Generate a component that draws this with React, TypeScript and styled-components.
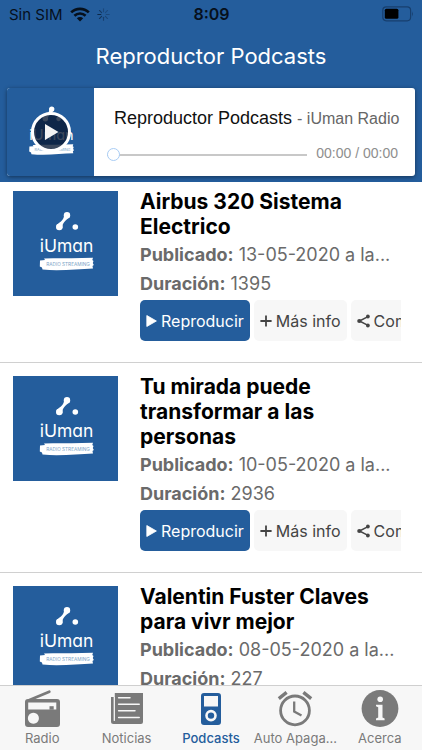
import React, { useState } from "react";
import styled, { createGlobalStyle } from "styled-components";

const blue = "#245d9c";
const gray = "#7a7a7a";

const GlobalStyle = createGlobalStyle`
  *, *::before, *::after { box-sizing: border-box; }
  body { margin: 0; background: #fff; font-family: Inter, "Noto Sans", sans-serif; }
  h1, h2, p { margin: 0; }
  button { font: inherit; border: 0; padding: 0; margin: 0; cursor: pointer; }
`;

const Screen = styled.div`
  display: flex;
  flex-direction: column;
  height: 100vh;
  overflow: hidden;
`;

const Header = styled.header`
  flex: none;
  background: ${blue};
  padding-bottom: 6px;
`;

const StatusBar = styled.div`
  display: grid;
  grid-template-columns: 1fr auto 1fr;
  align-items: center;
  height: 28px;
  padding: 0 8px 0 9px;
  color: #06101c;
  font-size: 15px;
`;

const Carrier = styled.div`
  display: flex;
  align-items: center;
  gap: 7px;
`;

const Clock = styled.time`
  font-weight: 600;
  font-size: 16px;
`;

const BatterySlot = styled.div`
  display: flex;
  justify-content: flex-end;
`;

const PageTitle = styled.h1`
  height: 60px;
  line-height: 56px;
  text-align: center;
  color: #fff;
  font-size: 22px;
  font-weight: 400;
`;

const Player = styled.section`
  display: flex;
  height: 88px;
  margin: 0 7px;
  border-radius: 3px;
  overflow: hidden;
  background: #fff;
  box-shadow: 0 1px 4px rgba(0, 0, 0, 0.45);
`;

const PlayerArt = styled.div`
  display: grid;
  flex: none;
  width: 87px;
  background: ${blue};
  & > * { grid-area: 1 / 1; place-self: center; }
`;

const PlayButton = styled.button`
  display: flex;
  align-items: center;
  justify-content: center;
  width: 40px;
  height: 40px;
  border: 3px solid #fff;
  border-radius: 50%;
  background: rgba(10, 26, 52, 0.8);
`;

const PlayerBody = styled.div`
  flex: 1;
  min-width: 0;
  padding: 17px 12px 0 13px;
  font-family: "Liberation Sans", Arial, sans-serif;
`;

const TrackTitle = styled.p`
  padding-left: 7px;
  line-height: 26px;
  white-space: nowrap;
  color: #111;
  font-size: 18px;
  span { font-size: 16px; color: #666; }
`;

const Progress = styled.div`
  display: flex;
  align-items: center;
  gap: 9px;
  height: 24px;
  margin-top: 11px;
  padding-right: 5px;
  color: #8e8e8e;
  font-size: 14px;
  white-space: nowrap;
`;

const TimeText = styled.span`
  height: 20px;
`;

const Seek = styled.input`
  flex: 1;
  min-width: 0;
  height: 14px;
  margin: 0;
  appearance: none;
  background: transparent;
  &::-webkit-slider-runnable-track { height: 2px; background: #c8c8c8; }
  &::-webkit-slider-thumb {
    appearance: none;
    width: 13px;
    height: 13px;
    margin-top: -6px;
    border: 1px solid #a9cdf5;
    border-radius: 50%;
    background: #fff;
  }
`;

const List = styled.main`
  flex: 1;
  min-height: 0;
  overflow-y: auto;
  scrollbar-width: none;
`;

const Episode = styled.article`
  display: flex;
  align-items: flex-start;
  gap: 22px;
  padding: 11px 21px 21px 13px;
  border-bottom: 1px solid #d0d0d0;
  &:first-child { padding-top: 7px; }
`;

const Cover = styled.div`
  flex: none;
  width: 105px;
  height: 105px;
  margin-top: 2px;
  background: ${blue};
`;

const Details = styled.div`
  flex: 1;
  min-width: 0;
`;

const EpisodeTitle = styled.h2`
  margin-bottom: 1px;
  color: #000;
  font-size: 21px;
  font-weight: 700;
  line-height: 25px;
`;

const Meta = styled.p`
  overflow: hidden;
  white-space: nowrap;
  color: #6a6a6a;
  font-size: 18px;
  line-height: 29px;
`;

const Actions = styled.div`
  display: flex;
  gap: 4px;
  margin-top: 2px;
  overflow: hidden;
`;

const Action = styled.button<{ $primary?: boolean }>`
  display: flex;
  flex: none;
  align-items: center;
  gap: 4px;
  height: 41px;
  padding: 0 6px;
  border-radius: 5px;
  background: ${(p) => (p.$primary ? blue : "#f7f7f7")};
  color: ${(p) => (p.$primary ? "#fff" : "#444")};
  && { font-size: 16px; }
`;

const TabBar = styled.nav`
  display: grid;
  flex: none;
  grid-template-columns: repeat(5, 1fr);
  height: 65px;
  border-top: 1px solid #cfcfcf;
  background: #f7f7f7;
`;

const Tab = styled.a<{ $active?: boolean }>`
  display: flex;
  flex-direction: column;
  align-items: center;
  gap: 1px;
  padding-top: 3px;
  white-space: nowrap;
  text-decoration: none;
  color: ${(p) => (p.$active ? blue : gray)};
  font-size: 13px;
  font-weight: ${(p) => (p.$active ? 500 : 400)};
  line-height: 20px;
`;

const LogoText = styled.text`
  font-family: Inter, sans-serif;
  font-feature-settings: "cv11", "ss03";
`;

function Logo({ size }: { size: number }) {
  return (
    <svg width={size} height={size} viewBox="0 0 105 105" role="img" aria-label="iUman Radio Streaming" display="block">
      <g fill="#fff">
        <circle cx="54" cy="24.2" r="3.2" />
        <circle cx="46.3" cy="36" r="3.3" />
        <circle cx="62.3" cy="36" r="2.8" />
        <path d="M51 23.1 C51.5 28.6 48 30.6 43.4 34.2 L49.5 37.3 C49 32.1 52 30.1 56.6 26.3 Z" />
        <LogoText x="53.6" y="61" textAnchor="middle" fontSize="17.5">iUman</LogoText>
        <path d="M27 69.5 L32 69 L31 67.5 C46 66.8 63 67.6 80 66.8 L79.3 69 L80.5 70 L79.8 72 L80.8 74 L79.5 75 L80 77.5 C65 78 47 80.4 29.5 78.6 L29 76.5 L26.8 75.5 Z" />
      </g>
      <LogoText x="55" y="75.3" textAnchor="middle" fontSize="4.7" fill="#7c9fc6">RADIO STREAMING</LogoText>
    </svg>
  );
}

const Wifi = () => (
  <svg width="20" height="15" viewBox="0 0 20 15" aria-hidden="true" fill="none" stroke="currentColor">
    <path d="M1.2 5.4 C6.2 .6 13.8 .6 18.8 5.4" strokeWidth="2.7" />
    <path d="M4.4 8.8 C7.6 5.8 12.4 5.8 15.6 8.8" strokeWidth="2.6" />
    <path d="M10 14.5 L6.8 11.3 C8.6 9.7 11.4 9.7 13.2 11.3 Z" fill="currentColor" stroke="none" />
  </svg>
);

const Spinner = () => (
  <svg width="13" height="13" viewBox="0 0 13 13" aria-hidden="true" stroke="#0b2340" strokeWidth="1.1" strokeLinecap="round">
    {[0.35, 0.3, 0.35, 0.4, 0.5, 0.7, 0.9, 0.6].map((o, i) => (
      <path key={i} d="M6.5 .8 V3.8" opacity={o} transform={`rotate(${i * 45} 6.5 6.5)`} />
    ))}
  </svg>
);

const Battery = () => (
  <svg width="32" height="16" viewBox="0 0 32 16" aria-hidden="true">
    <rect x=".8" y=".8" width="27.8" height="14" rx="3.5" fill="none" stroke="#173f6e" strokeWidth="1.2" />
    <rect x="2.8" y="2.8" width="13.6" height="10" rx="1.5" fill="#000" />
    <path d="M30 5.2 Q31.8 7.8 30 10.4 Z" fill="#173f6e" />
  </svg>
);

const PlayIcon = () => (
  <svg width="11" height="12" viewBox="0 0 11 12" aria-hidden="true">
    <path d="M.8 .5 L10.4 6 L.8 11.5 Z" fill="currentColor" stroke="currentColor" strokeWidth=".8" strokeLinejoin="round" />
  </svg>
);

const PlusIcon = () => (
  <svg width="12" height="12" viewBox="0 0 12 12" aria-hidden="true">
    <path d="M6 .4 V11.6 M.4 6 H11.6" stroke="currentColor" strokeWidth="1.8" />
  </svg>
);

const ShareIcon = () => (
  <svg width="13" height="14" viewBox="0 0 13 14" aria-hidden="true" fill="currentColor">
    <path d="M11 2.6 L2.4 7 L11 11.4" fill="none" stroke="currentColor" strokeWidth="1.5" />
    <circle cx="10.9" cy="2.5" r="1.9" />
    <circle cx="2.3" cy="7" r="2.1" />
    <circle cx="10.9" cy="11.5" r="1.9" />
  </svg>
);

const RadioIcon = () => (
  <svg width="36" height="38" viewBox="0 0 36 38" aria-hidden="true">
    <path d="M5.5 11 L25.3 2.7" stroke="currentColor" strokeWidth="2.8" strokeLinecap="round" />
    <path fill="currentColor" fillRule="evenodd" d="M4 10 H33 Q36 10 36 13 V35 Q36 38 33 38 H4 Q1 38 1 35 V13 Q1 10 4 10 Z M4.2 13.5 V20.4 H32.3 V13.5 Z M9.4 23.7 a5.5 5.5 0 1 0 .01 0 Z" />
    <path d="M25.5 17.2 h4.2 v3.5 h-4.2 z" fill="currentColor" />
  </svg>
);

const NewsIcon = () => (
  <svg width="34" height="38" viewBox="0 0 34 38" aria-hidden="true">
    <path d="M4.8 4 H33 V33 Q33 35 31 35 H3.5 Q1 35 1 32.5 V8 H3.8 V32 H4.8 Z" fill="currentColor" />
    <path d="M4.3 8 V31.5" stroke="#f7f7f7" strokeWidth="1" />
    <path d="M8.6 8.7 H20 M8.6 15.2 H29.2 M8.6 21.8 H25 M8.6 28.4 H29.2" stroke="#f7f7f7" strokeWidth="1.5" strokeLinecap="round" />
  </svg>
);

const IpodIcon = () => (
  <svg width="22" height="38" viewBox="0 0 22 38" aria-hidden="true">
    <path fill="currentColor" fillRule="evenodd" d="M4 4 H18 Q21 4 21 7 V33 Q21 36 18 36 H4 Q1 36 1 33 V7 Q1 4 4 4 Z M4 7 V17.5 H18 V7 Z" />
    <circle cx="11" cy="26.6" r="4.5" fill="none" stroke="#f7f7f7" strokeWidth="2.6" />
  </svg>
);

const AlarmIcon = () => (
  <svg width="36" height="38" viewBox="0 0 36 38" aria-hidden="true" fill="none" stroke="currentColor">
    <circle cx="18" cy="21.4" r="14.4" strokeWidth="2.8" />
    <path d="M17.2 12.5 V22.5 L24.5 26.4" strokeWidth="2.3" />
    <path d="M1.8 9.6 L9.6 3.4 M34.2 9.6 L26.4 3.4" strokeWidth="3.4" />
  </svg>
);

const InfoIcon = () => (
  <svg width="38" height="38" viewBox="0 0 38 38" aria-hidden="true">
    <circle cx="19" cy="19.5" r="18.4" fill="currentColor" />
    <circle cx="19.2" cy="10.3" r="2.8" fill="#f7f7f7" />
    <path d="M15 15.7 H21.5 V28.5 L23.6 29.6 V31.2 H15 V29.6 L17.2 28.5 V18.2 L15 17.2 Z" fill="#f7f7f7" />
  </svg>
);

const episodes = [
  { title: "Airbus 320 Sistema Electrico", date: "13-05-2020 a la...", length: "1395" },
  { title: "Tu mirada puede transformar a las personas", date: "10-05-2020 a la...", length: "2936" },
  { title: "Valentin Fuster Claves para vivr mejor", date: "08-05-2020 a la...", length: "227" },
];

const tabs = [
  { label: "Radio", Icon: RadioIcon },
  { label: "Noticias", Icon: NewsIcon },
  { label: "Podcasts", Icon: IpodIcon },
  { label: "Auto Apaga...", Icon: AlarmIcon },
  { label: "Acerca", Icon: InfoIcon },
];

export default function App() {
  const [position, setPosition] = useState(0);
  const [active, setActive] = useState("Podcasts");
  return (
    <Screen>
      <GlobalStyle />
      <Header>
        <StatusBar>
          <Carrier>Sin SIM <Wifi /><Spinner /></Carrier>
          <Clock>8:09</Clock>
          <BatterySlot><Battery /></BatterySlot>
        </StatusBar>
        <PageTitle>Reproductor Podcasts</PageTitle>
        <Player aria-label="Reproductor">
          <PlayerArt>
            <Logo size={87} />
            <PlayButton aria-label="Reproducir">
              <svg width="16" height="18" viewBox="0 0 16 18" aria-hidden="true">
                <path d="M2 1 L15.5 9 L2 17 Z" fill="#f4f4f4" />
              </svg>
            </PlayButton>
          </PlayerArt>
          <PlayerBody>
            <TrackTitle>Reproductor Podcasts <span>- iUman Radio</span></TrackTitle>
            <Progress>
              <Seek type="range" min={0} max={100} aria-label="Posición" value={position} onChange={(e) => setPosition(Number(e.target.value))} />
              <TimeText>00:00 / 00:00</TimeText>
            </Progress>
          </PlayerBody>
        </Player>
      </Header>
      <List>
        {episodes.map((e) => (
          <Episode key={e.title}>
            <Cover><Logo size={105} /></Cover>
            <Details>
              <EpisodeTitle>{e.title}</EpisodeTitle>
              <Meta><b>Publicado:</b> {e.date}</Meta>
              <Meta><b>Duración:</b> {e.length}</Meta>
              <Actions>
                <Action $primary><PlayIcon />Reproducir</Action>
                <Action><PlusIcon />Más info</Action>
                <Action><ShareIcon />Compartir</Action>
              </Actions>
            </Details>
          </Episode>
        ))}
      </List>
      <TabBar>
        {tabs.map(({ label, Icon }) => (
          <Tab key={label} href="#" $active={label === active} onClick={(ev) => { ev.preventDefault(); setActive(label); }}>
            <Icon />
            {label}
          </Tab>
        ))}
      </TabBar>
    </Screen>
  );
}
